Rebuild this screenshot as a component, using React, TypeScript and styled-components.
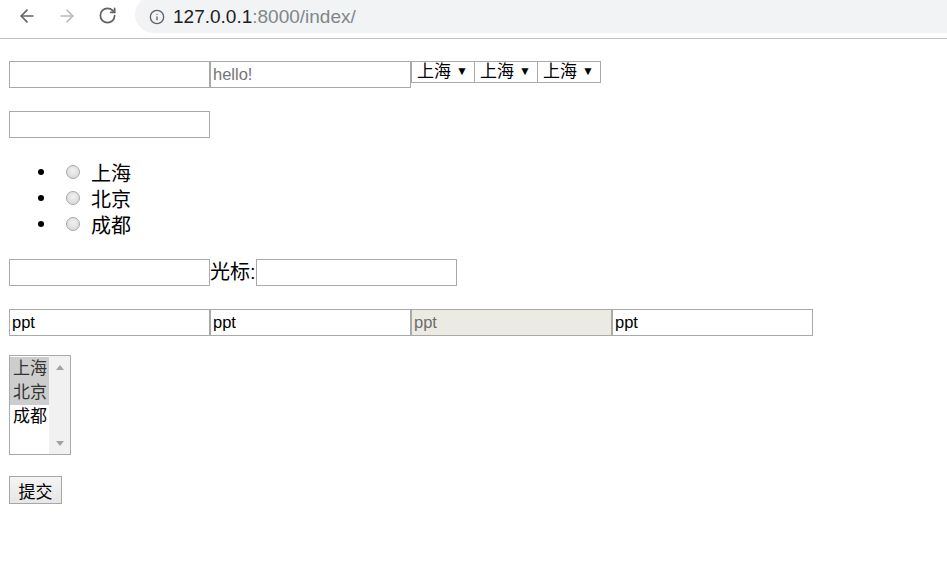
import React from "react";
import styled, { createGlobalStyle } from "styled-components";
import { ArrowLeft, ArrowRight, RotateCw, Info } from "lucide-react";

const Global = createGlobalStyle`
  html, body { margin: 0; padding: 0; background: #fff; }
  body { font-family: "Liberation Sans", "Noto Sans CJK SC", sans-serif; color: #000; }
  * { box-sizing: border-box; }
`;

const CJK = `"Liberation Sans", "Noto Sans CJK SC", sans-serif`;

const TopBar = styled.header`
  height: 39px;
  border-bottom: 1px solid #c2c2c2;
  display: flex;
  align-items: flex-start;
  padding-left: 7px;
  background: #fff;
  overflow: hidden;
`;

const NavButton = styled.span<{ $dim?: boolean }>`
  width: 40px;
  height: 31px;
  display: flex;
  align-items: center;
  justify-content: center;
  color: ${(p) => (p.$dim ? "#b9bbbe" : "#5f6368")};
`;

const Omnibox = styled.div`
  margin-left: 8px;
  margin-top: -4px;
  height: 37px;
  flex: 1;
  background: #f1f3f4;
  border-radius: 19px 0 0 19px;
  display: flex;
  align-items: center;
  padding: 4px 0 0 14px;
  gap: 8px;
  color: #5f6368;
`;

const Url = styled.span`
  font-family: "Liberation Sans", sans-serif;
  font-size: 19px;
  color: #80868b;
`;

const Host = styled.span`
  color: #202124;
`;

const Page = styled.main`
  padding: 22px 0 40px 9px;
  display: flex;
  flex-direction: column;
  align-items: flex-start;
`;

const Row = styled.div<{ $mt?: number }>`
  display: flex;
  align-items: flex-start;
  margin-top: ${(p) => p.$mt ?? 0}px;
`;

const TextInput = styled.input`
  width: 201px;
  height: 27px;
  border: 1px solid #a9a9a9;
  padding: 0 2px;
  font-family: ${CJK};
  font-size: 16.5px;
  color: #000;
  background: #fff;
  outline: none;
  &::placeholder { color: #757575; }
  &:disabled { background: #ebebe4; color: #6d6d6d; }
`;

const SelectWrap = styled.span`
  position: relative;
  display: flex;
  margin-left: -1px;
  &:first-of-type { margin-left: 0; }
`;

const NativeSelect = styled.select`
  appearance: none;
  -webkit-appearance: none;
  display: block;
  margin: 0;
  height: 22px;
  width: 64px;
  border: 1px solid #a9a9a9;
  border-radius: 0;
  background: #fff;
  font-family: ${CJK};
  font-size: 17px;
  line-height: 20px;
  padding: 0 0 0 5px;
  color: #000;
  outline: none;
`;

const Caret = styled.span`
  position: absolute;
  right: 7px;
  top: 3px;
  font-size: 12px;
  pointer-events: none;
  color: #000;
`;

const List = styled.ul<{ $mt?: number }>`
  list-style: none;
  margin: ${(p) => p.$mt ?? 0}px 0 0 0;
  padding: 0 0 0 29px;
  display: flex;
  flex-direction: column;
`;

const Item = styled.li`
  display: flex;
  align-items: center;
  height: 26px;
  font-family: ${CJK};
  font-size: 20px;
`;

const Bullet = styled.span`
  width: 6px;
  height: 6px;
  border-radius: 50%;
  background: #000;
  margin-right: 22px;
`;

const Radio = styled.span`
  width: 14px;
  height: 14px;
  border-radius: 50%;
  border: 1px solid #a8a8a8;
  background: radial-gradient(circle at 50% 40%, #f2f2f2 0%, #dcdcdc 70%, #d2d2d2 100%);
  margin-right: 11px;
`;

const Label = styled.span`
  font-family: ${CJK};
  font-size: 20px;
  line-height: 27px;
`;

const ListBox = styled.div<{ $mt?: number }>`
  margin-top: ${(p) => p.$mt ?? 0}px;
  width: 62px;
  height: 100px;
  border: 1px solid #a9a9a9;
  display: flex;
  background: #fff;
`;

const Options = styled.div`
  width: 39px;
  padding-top: 1px;
  display: flex;
  flex-direction: column;
`;

const Option = styled.div<{ $selected?: boolean }>`
  height: 24px;
  line-height: 24px;
  padding-left: 3px;
  font-family: ${CJK};
  font-size: 17px;
  background: ${(p) => (p.$selected ? "#cdcdcd" : "transparent")};
  color: ${(p) => (p.$selected ? "#333" : "#000")};
`;

const Scrollbar = styled.div`
  flex: 1;
  background: #f1f1f1;
  display: flex;
  flex-direction: column;
  justify-content: space-between;
  align-items: center;
  padding: 9px 0 8px;
`;

const Button = styled.button<{ $mt?: number }>`
  margin-top: ${(p) => p.$mt ?? 0}px;
  width: 53px;
  height: 28px;
  border: 1px solid #a6a6a6;
  border-radius: 0;
  background: linear-gradient(#f4f4f4, #e6e6e6);
  font-family: ${CJK};
  font-size: 17px;
  color: #000;
  padding: 0;
`;

const Tri = ({ down }: { down?: boolean }) => (
  <svg width="8" height="5" viewBox="0 0 8 5">
    <polygon points={down ? "0,0 8,0 4,5" : "0,5 8,5 4,0"} fill="#a3a3a3" />
  </svg>
);

const Select = () => (
  <SelectWrap>
    <NativeSelect defaultValue="sh">
      <option value="sh">上海</option>
      <option value="bj">北京</option>
      <option value="cd">成都</option>
    </NativeSelect>
    <Caret>▼</Caret>
  </SelectWrap>
);

export default function App() {
  return (
    <>
      <Global />
      <TopBar>
        <NavButton><ArrowLeft size={20} strokeWidth={2} /></NavButton>
        <NavButton $dim><ArrowRight size={20} strokeWidth={2} /></NavButton>
        <NavButton><RotateCw size={19} strokeWidth={2.2} /></NavButton>
        <Omnibox>
          <Info size={16} strokeWidth={2} />
          <Url><Host>127.0.0.1</Host>:8000/index/</Url>
        </Omnibox>
      </TopBar>
      <Page>
        <Row>
          <TextInput />
          <TextInput placeholder="hello!" />
          <Select />
          <Select />
          <Select />
        </Row>
        <Row $mt={23}>
          <TextInput />
        </Row>
        <List $mt={21}>
          {["上海", "北京", "成都"].map((c) => (
            <Item key={c}>
              <Bullet />
              <Radio />
              {c}
            </Item>
          ))}
        </List>
        <Row $mt={22}>
          <TextInput />
          <Label>光标:</Label>
          <TextInput />
        </Row>
        <Row $mt={23}>
          <TextInput defaultValue="ppt" />
          <TextInput defaultValue="ppt" />
          <TextInput defaultValue="ppt" disabled />
          <TextInput defaultValue="ppt" />
        </Row>
        <ListBox $mt={19}>
          <Options>
            <Option $selected>上海</Option>
            <Option $selected>北京</Option>
            <Option>成都</Option>
          </Options>
          <Scrollbar>
            <Tri />
            <Tri down />
          </Scrollbar>
        </ListBox>
        <Button $mt={21}>提交</Button>
      </Page>
    </>
  );
}
